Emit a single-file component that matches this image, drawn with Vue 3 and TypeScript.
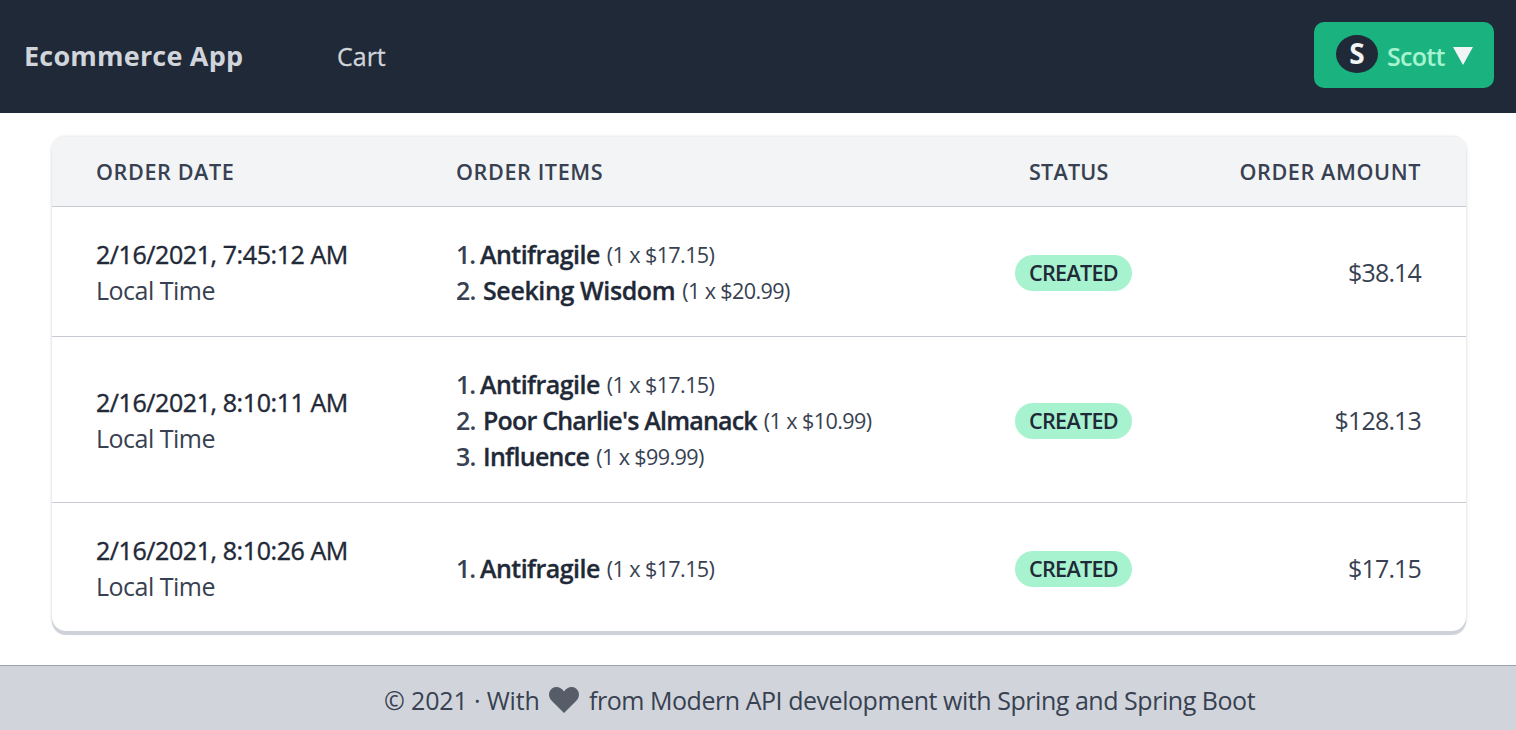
<script setup lang="ts">
interface OrderItem {
  name: string
  detail: string
  tracking: number
}

interface Order {
  date: string
  items: OrderItem[]
  status: string
  amount: string
}

const antifragile: OrderItem = { name: 'Antifragile', detail: '(1 x $17.15)', tracking: -0.55 }

const orders: Order[] = [
  {
    date: '2/16/2021, 7:45:12 AM',
    items: [antifragile, { name: 'Seeking Wisdom', detail: '(1 x $20.99)', tracking: -0.38 }],
    status: 'CREATED',
    amount: '$38.14',
  },
  {
    date: '2/16/2021, 8:10:11 AM',
    items: [
      antifragile,
      { name: "Poor Charlie's Almanack", detail: '(1 x $10.99)', tracking: -0.8 },
      { name: 'Influence', detail: '(1 x $99.99)', tracking: -0.7 },
    ],
    status: 'CREATED',
    amount: '$128.13',
  },
  {
    date: '2/16/2021, 8:10:26 AM',
    items: [antifragile],
    status: 'CREATED',
    amount: '$17.15',
  },
]
</script>

<template>
  <div class="page">
    <header class="navbar">
      <a class="brand">Ecommerce App</a>
      <a class="link">Cart</a>
      <button class="user">
        <span class="avatar">S</span>
        <span class="username">Scott</span>
        <svg class="caret" viewBox="0 0 20 18"><path d="M0 0H20L10 18Z" fill="#f3f4f6" /></svg>
      </button>
    </header>

    <main class="content">
      <section class="orders">
        <div class="row head">
          <div class="cell">ORDER DATE</div>
          <div class="cell">ORDER ITEMS</div>
          <div class="cell head-status">STATUS</div>
          <div class="cell right">ORDER AMOUNT</div>
        </div>
        <div v-for="order in orders" :key="order.date" class="row">
          <div class="cell">
            <div class="date">{{ order.date }}</div>
            <div class="zone">Local Time</div>
          </div>
          <div class="cell">
            <div v-for="(item, index) in order.items" :key="item.name" class="item">
              <span class="num" :class="{ first: index === 0 }">{{ index + 1 }}.</span>
              <span class="name" :style="{ letterSpacing: item.tracking + 'px' }">{{ item.name }}</span>
              <span class="detail">{{ item.detail }}</span>
            </div>
          </div>
          <div class="cell"><span class="badge">{{ order.status }}</span></div>
          <div class="cell right amount">{{ order.amount }}</div>
        </div>
      </section>
    </main>

    <footer class="footer">
      <span class="made">© 2021 · With</span>
      <svg class="heart" viewBox="0 0 30 26">
        <path d="M15 26L2 13C-1 9.500-.5 4 3 1.500C7-1.200 12 0 15 4.500C18 0 23-1.200 27 1.500C30.500 4 31 9.500 28 13Z" fill="#565d69" />
      </svg>
      <span class="source">from Modern API development with Spring and Spring Boot</span>
    </footer>
  </div>
</template>

<style>
body {
  margin: 0;
  background: #fff;
}
</style>

<style scoped>
.page {
  display: flex;
  flex-direction: column;
  height: 730px;
  overflow: hidden;
  font-family: "Open Sans", "Noto Sans", sans-serif;
  font-size: 25px;
  line-height: 36px;
  color: #374151;
  white-space: nowrap;
}

.navbar {
  display: flex;
  align-items: center;
  box-sizing: border-box;
  height: 113px;
  padding: 0 22px 4px 25px;
  background: #1f2937;
  color: #d1d5db;
}

.brand {
  width: 313px;
  margin-left: -1px;
  padding-top: 2px;
  font-size: 27px;
  font-weight: 700;
  letter-spacing: 0.2px;
}

.link {
  padding-top: 2px;
  letter-spacing: 0;
  -webkit-text-stroke: 0.3px currentColor;
}

.user {
  display: flex;
  align-items: center;
  box-sizing: border-box;
  width: 180px;
  height: 66px;
  margin-left: auto;
  padding: 0 21px 0 22px;
  border: 0;
  border-radius: 10px;
  background: #1ab380;
  font: inherit;
}

.avatar {
  flex: none;
  width: 42px;
  height: 38px;
  margin-top: -2px;
  border-radius: 50%;
  background: #1f2937;
  color: #f3f4f6;
  font-size: 28px;
  font-weight: 700;
  line-height: 36px;
  text-align: center;
}

.username {
  flex: none;
  width: 75px;
  padding: 2px 0 0 9px;
  box-sizing: border-box;
  color: #a7f3d0;
  font-weight: 600;
  letter-spacing: -0.7px;
  text-align: left;
}

.caret {
  flex: none;
  width: 20px;
  height: 18px;
  margin-top: 2px;
}

.content {
  flex: 1;
  padding: 24px 50px 0 52px;
}

.orders {
  border-radius: 14px;
  overflow: hidden;
  box-shadow: 0 4px 1px #cdd1d8, 0 0 3px 1px rgba(0, 0, 0, 0.1);
}

.row {
  display: grid;
  grid-template-columns: 360px 551px 1fr 300px;
  align-items: center;
  box-sizing: border-box;
  padding: 29px 0 28px;
  border-top: 1px solid #c6cad2;
}

.row:last-child {
  padding-bottom: 27px;
}

.head {
  height: 69px;
  padding: 0;
  border-top: 0;
  background: #f3f4f6;
  font-size: 21.6px;
  font-weight: 600;
  letter-spacing: 0.6px;
}

.cell {
  padding: 0 44px;
}

.head-status {
  padding-left: 66px;
  letter-spacing: 0.2px;
}

.row > .cell:nth-child(3) {
  padding-right: 0;
}

.row:not(.head) > .cell:nth-child(3) {
  padding: 2px 0 0 52px;
}

.right {
  padding-right: 45px;
  text-align: right;
}

.date {
  color: #1f2937;
  letter-spacing: -0.42px;
  -webkit-text-stroke: 0.4px currentColor;
}

.zone {
  letter-spacing: -0.5px;
}

.item {
  display: flex;
}

.num {
  width: 27px;
  font-weight: 600;
  letter-spacing: -0.7px;
}

.num.first {
  width: 24px;
  letter-spacing: -1px;
}

.name {
  margin-right: 7px;
  color: #1f2937;
  font-weight: 600;
  -webkit-text-stroke: 0.3px currentColor;
}

.detail {
  padding-top: 1px;
  line-height: 35px;
  font-size: 21.6px;
  letter-spacing: -0.62px;
}

.badge {
  display: block;
  width: 117px;
  height: 36px;
  border-radius: 18px;
  background: #a7f3d0;
  color: #1f2937;
  font-size: 21.6px;
  font-weight: 600;
  letter-spacing: -0.7px;
  text-align: center;
}

.amount {
  letter-spacing: -0.85px;
}

.footer {
  display: flex;
  align-items: center;
  box-sizing: border-box;
  height: 65px;
  padding: 3px 0 0 384px;
  border-top: 1px solid #9ca3af;
  background: #d1d5db;
}

.made {
  width: 165px;
  letter-spacing: -0.15px;
}

.heart {
  width: 30px;
  height: 26px;
  margin-right: 10px;
}

.source {
  letter-spacing: -0.46px;
}
</style>
